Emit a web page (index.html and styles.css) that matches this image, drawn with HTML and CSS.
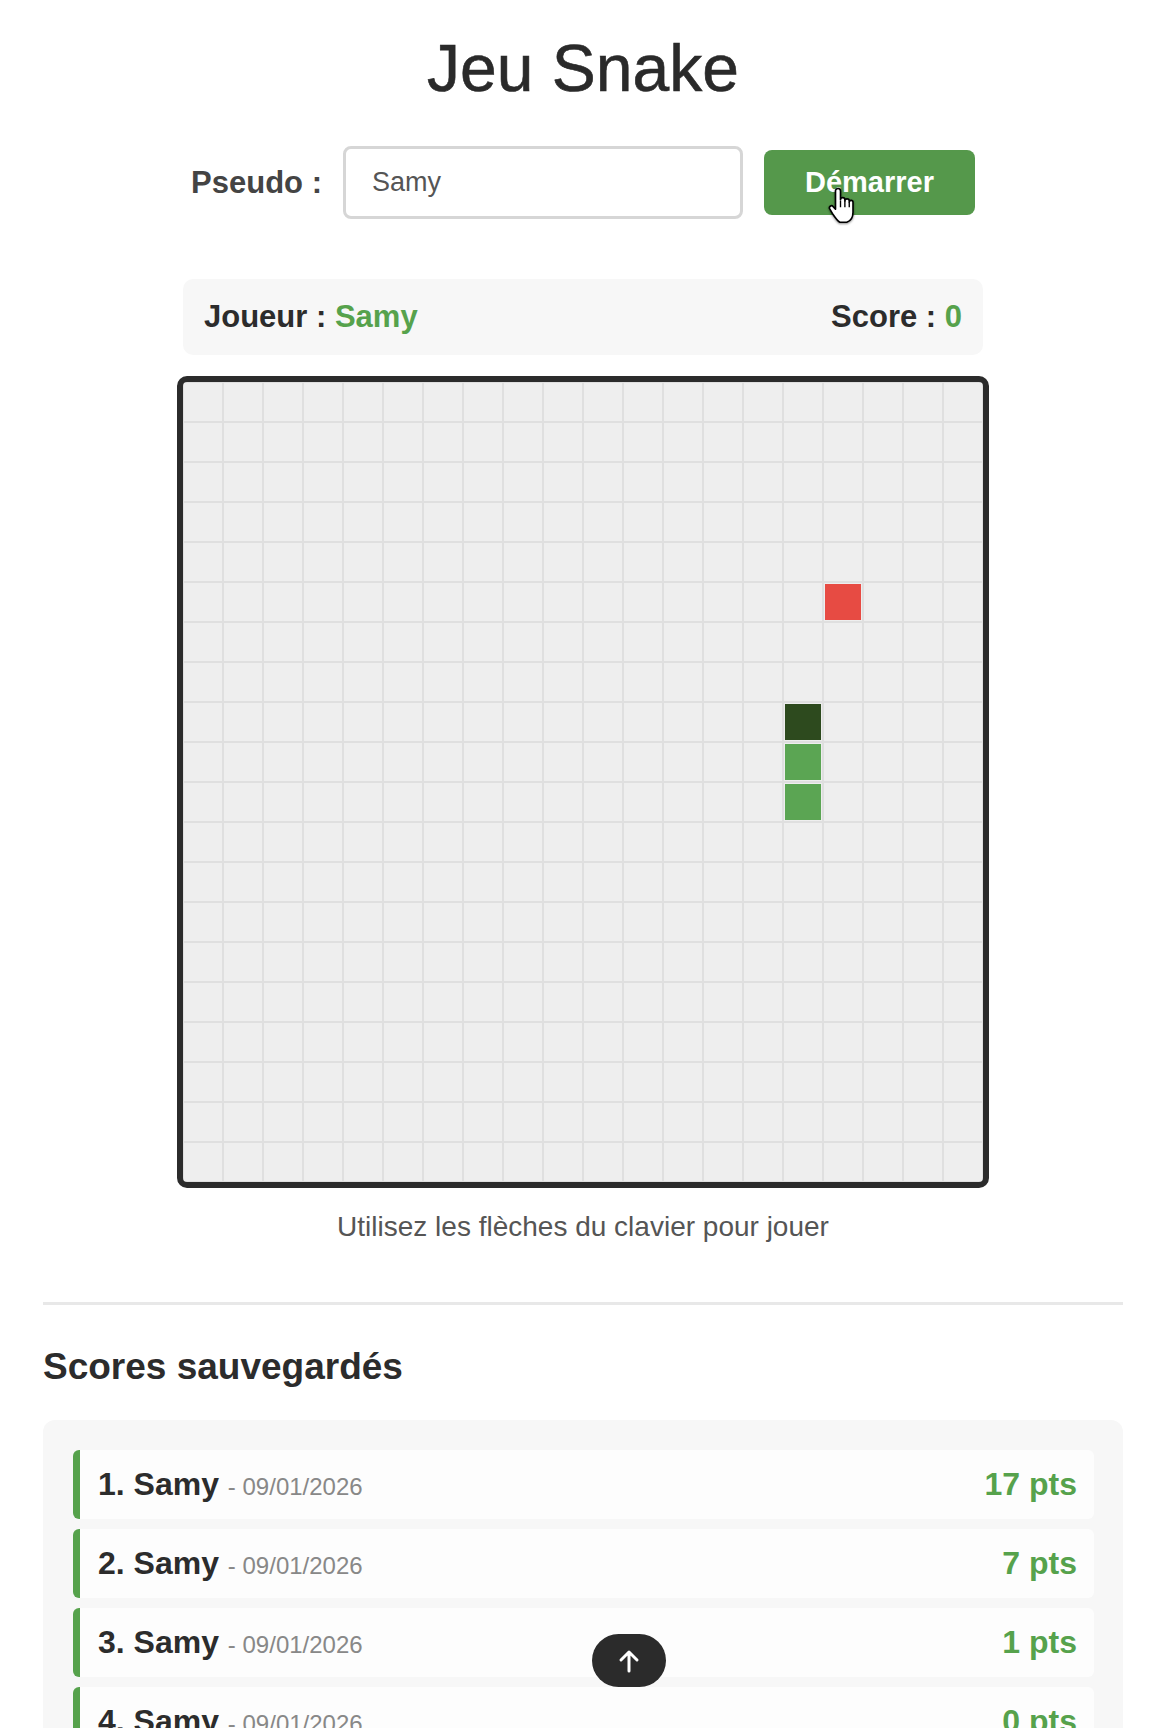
FILE: index.html
```html
<!DOCTYPE html>
<html lang="fr">
<head>
<meta charset="utf-8">
<title>Jeu Snake</title>
<link rel="stylesheet" href="styles.css">
</head>
<body>
<div class="page">
  <h1 class="title">Jeu Snake</h1>

  <div class="controls">
    <label class="label" for="pseudo">Pseudo :</label>
    <input id="pseudo" class="input" type="text" value="Samy">
    <div class="btn-wrap">
      <button class="btn">Démarrer</button>
      <svg class="cursor" width="30" height="38" viewBox="0 0 24 30" aria-hidden="true">
        <path d="M6 14 V3 a2 2 0 0 1 4 0 V10 a1.75 1.75 0 0 1 3.5 0 V11 a1.75 1.75 0 0 1 3.5 0 V12 a1.5 1.5 0 0 1 3 0 V20 c0 4 -2 7 -5 8 H9.5 c-2 -1 -4 -4 -6 -7 L1.5 17.5 a1.6 1.6 0 0 1 2.6 -2 L6 17.5 Z" fill="#fff" stroke="#000" stroke-width="1.3" stroke-linejoin="round"/>
        <path d="M10 10.5 V16 M13.5 11 V16 M17 12 V16" stroke="#000" stroke-width="1.1" fill="none"/>
      </svg>
    </div>
  </div>

  <div class="info">
    <div>Joueur : <span class="green">Samy</span></div>
    <div>Score : <span class="green">0</span></div>
  </div>

  <div class="board">
    <div class="food"></div>
    <div class="snake head"></div>
    <div class="snake body1"></div>
    <div class="snake body2"></div>
  </div>

  <p class="hint">Utilisez les flèches du clavier pour jouer</p>

  <hr class="divider">

  <h2 class="subtitle">Scores sauvegardés</h2>

  <div class="scores">
    <div class="item"><div class="who">1. Samy <span class="date">- 09/01/2026</span></div><div class="pts">17 pts</div></div>
    <div class="item"><div class="who">2. Samy <span class="date">- 09/01/2026</span></div><div class="pts">7 pts</div></div>
    <div class="item"><div class="who">3. Samy <span class="date">- 09/01/2026</span></div><div class="pts">1 pts</div></div>
    <div class="item"><div class="who">4. Samy <span class="date">- 09/01/2026</span></div><div class="pts">0 pts</div></div>
  </div>
</div>

<button class="to-top" aria-label="Haut de page">
  <svg width="22" height="24" viewBox="0 0 22 24"><path d="M11 22 V3 M3 11 L11 3 L19 11" stroke="#fff" stroke-width="3" fill="none" stroke-linecap="round" stroke-linejoin="round"/></svg>
</button>
</body>
</html>
```

FILE: styles.css
```css
html, body {
  height: 100%;
  overflow: hidden;
}
body {
  margin: 0;
  background: #ffffff;
  font-family: "Liberation Sans", Arial, sans-serif;
  color: #2c2c2c;
}
.page {
  width: 1080px;
  margin-left: 43px;
}
.title {
  margin: 30px 0 0;
  font-size: 66px;
  line-height: 76px;
  font-weight: 400;
  text-align: center;
  color: #2a2a2a;
  -webkit-text-stroke: 0.6px #2a2a2a;
}
.controls {
  margin-top: 40px;
  display: flex;
  justify-content: center;
  align-items: center;
  gap: 21px;
}
.label {
  font-size: 31px;
  font-weight: 700;
  color: #444;
}
.input {
  box-sizing: border-box;
  width: 400px;
  height: 73px;
  border: 3px solid #d6d6d6;
  border-radius: 8px;
  padding: 0 0 0 26px;
  font-family: "Liberation Sans", Arial, sans-serif;
  font-size: 27px;
  color: #555;
  outline: none;
}
.btn-wrap {
  position: relative;
}
.btn {
  display: block;
  width: 211px;
  height: 65px;
  border: 0;
  border-radius: 8px;
  background: #55984b;
  color: #fff;
  font-family: "Liberation Sans", Arial, sans-serif;
  font-size: 29px;
  font-weight: 700;
}
.cursor {
  position: absolute;
  left: 64px;
  top: 37px;
  filter: drop-shadow(0 1px 1px rgba(0,0,0,0.45));
}
.info {
  box-sizing: border-box;
  width: 800px;
  height: 76px;
  margin: 60px auto 0;
  padding: 0 21px;
  display: flex;
  justify-content: space-between;
  align-items: center;
  background: #f7f7f7;
  border-radius: 10px;
  font-size: 31px;
  font-weight: 700;
  color: #2c2c2c;
}
.green {
  color: #56a24c;
}
.board {
  width: 800px;
  height: 800px;
  margin: 21px auto 0;
  border: 6px solid #2b2b2b;
  border-radius: 10px;
  display: grid;
  grid-template-columns: repeat(20, 40px);
  grid-template-rows: repeat(20, 40px);
  background-color: #eeeeee;
  background-image:
    linear-gradient(to right, #dfdfdf 0 1px, transparent 1px 39px, #dfdfdf 39px 40px),
    linear-gradient(to bottom, #dfdfdf 0 1px, transparent 1px 39px, #dfdfdf 39px 40px);
  background-size: 40px 40px;
}
.food,
.snake {
  margin: 2px;
}
.food {
  grid-column: 17;
  grid-row: 6;
  background: #e74b43;
}
.head {
  grid-column: 16;
  grid-row: 9;
  background: #2d4a1e;
}
.body1 {
  grid-column: 16;
  grid-row: 10;
  background: #5ba553;
}
.body2 {
  grid-column: 16;
  grid-row: 11;
  background: #5ba553;
}
.hint {
  margin: 23px 0 0;
  font-size: 28px;
  line-height: 32px;
  color: #555;
  text-align: center;
}
.divider {
  margin: 59px 0 0;
  height: 3px;
  border: 0;
  background: #e8e8e8;
}
.subtitle {
  margin: 41px 0 0;
  font-size: 37px;
  line-height: 42px;
  font-weight: 700;
  color: #2c2c2c;
}
.scores {
  margin-top: 32px;
  padding: 30px 29px 30px 30px;
  background: #f7f7f7;
  border-radius: 12px;
  display: flex;
  flex-direction: column;
  gap: 10px;
}
.item {
  display: flex;
  justify-content: space-between;
  align-items: baseline;
  padding: 16px 17px 16px 18px;
  background: #fdfdfd;
  border-left: 7px solid #56a24c;
  border-radius: 6px;
  font-size: 32px;
  line-height: 37px;
}
.who {
  font-weight: 700;
  color: #2c2c2c;
}
.date {
  font-size: 24px;
  line-height: 1;
  font-weight: 400;
  color: #888;
}
.pts {
  font-weight: 700;
  color: #56a24c;
}
.to-top {
  position: fixed;
  left: 592px;
  bottom: 41px;
  width: 74px;
  height: 53px;
  border: 0;
  border-radius: 27px;
  background: #2b2b2b;
  display: flex;
  align-items: center;
  justify-content: center;
  padding: 0;
}
```
